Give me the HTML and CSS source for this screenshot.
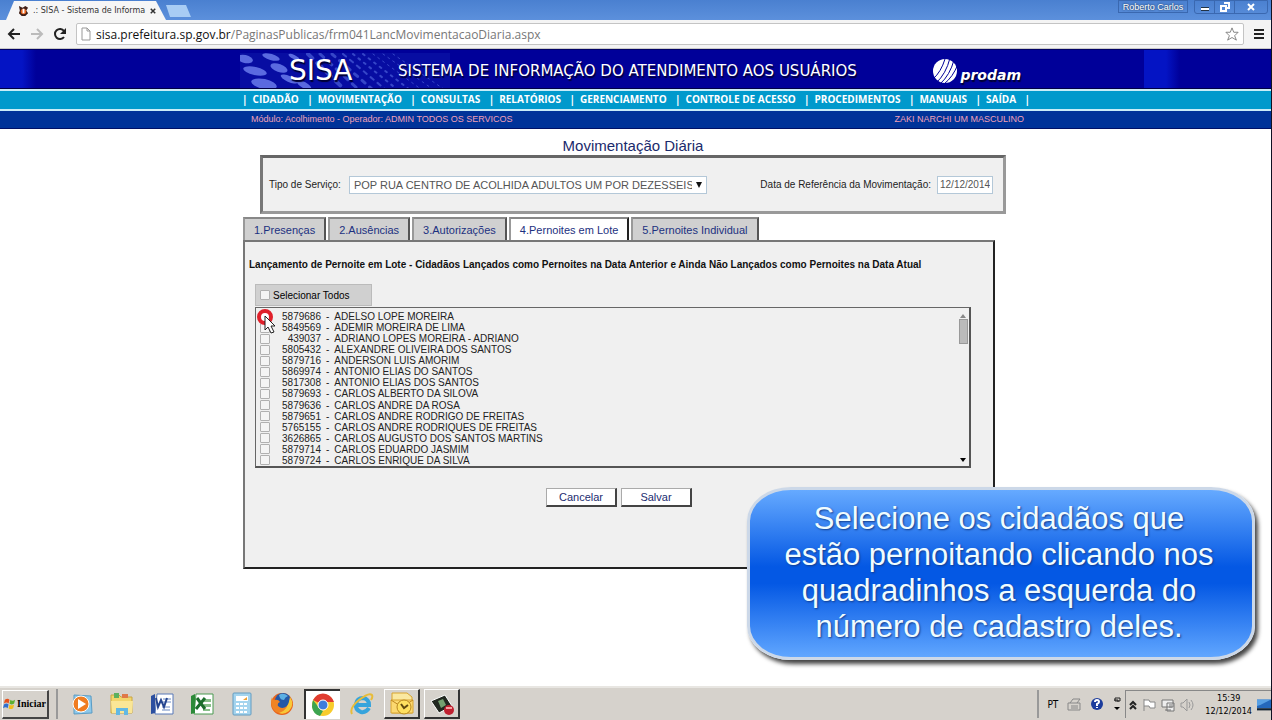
FILE: index.html
```
<!DOCTYPE html>
<html lang="pt-BR">
<head>
    <meta charset="UTF-8">
    <meta name="viewport" content="width=device-width, initial-scale=1.0">
    <title>.: SISA - Sistema de Informação</title>
    <link rel="stylesheet" href="styles.css">
</head>
<body>
    <div class="titlebar">
        <div class="tab">
            <svg class="favicon" viewBox="0 0 12 12"><path d="M1 1l4 2 3-2 3 2-2 3 2 3-3 3H4L1 9l1-3z" fill="#402018"/><circle cx="6" cy="7" r="3" fill="#e8641e"/><path d="M5 4h2v5H5z" fill="#fff"/></svg>
            <span class="tab-title">.: SISA - Sistema de Informa</span>
            <button class="tab-close" aria-label="Fechar aba"><svg viewBox="0 0 8 8"><path d="M1 1l6 6M7 1L1 7" stroke="#333" stroke-width="2"/></svg></button>
        </div>
        <button class="new-tab" aria-label="Nova aba"></button>
        <div class="window-buttons">
            <button class="user-btn">Roberto Carlos</button>
            <div class="window-group">
                <button aria-label="Minimizar"><svg viewBox="0 0 12 10"><path d="M2 7h8" stroke="#234" stroke-width="4"/><path d="M2 7h8" stroke="#fff" stroke-width="2"/></svg></button>
                <button aria-label="Restaurar"><svg viewBox="0 0 12 10"><path d="M5 1h5v5H8M2 4h5v5H2z" fill="none" stroke="#fff" stroke-width="2"/></svg></button>
                <button class="close" aria-label="Fechar"><svg viewBox="0 0 12 10"><path d="M3 2l6 6M9 2L3 8" stroke="#fff" stroke-width="2"/></svg></button>
            </div>
        </div>
    </div>

    <div class="toolbar">
        <button aria-label="Voltar"><svg viewBox="0 0 14 14"><path d="M13 7H3M7 2L2 7l5 5" fill="none" stroke="#222" stroke-width="2"/></svg></button>
        <button aria-label="Avançar"><svg viewBox="0 0 14 14"><path d="M1 7h10M7 2l5 5-5 5" fill="none" stroke="#bbb" stroke-width="2"/></svg></button>
        <button aria-label="Recarregar"><svg viewBox="0 0 14 14"><path d="M11 10a5 5 0 1 1 0-6" fill="none" stroke="#222" stroke-width="2"/><path d="M13 1v6H7z" fill="#222"/></svg></button>
        <div class="address">
            <svg class="page-icon" viewBox="0 0 10 14"><path d="M1 1h5l3 3v9H1zM6 1v3h3" fill="#fff" stroke="#999"/></svg>
            <span class="url"><b>sisa.prefeitura.sp.gov.br</b>/PaginasPublicas/frm041LancMovimentacaoDiaria.aspx</span>
            <button aria-label="Favoritos"><svg viewBox="0 0 16 16"><path d="M8 1l2 5h5l-4 4 2 5-5-3-5 3 2-5-4-4h5z" fill="#fff" stroke="#777"/></svg></button>
        </div>
        <button class="menu-btn" aria-label="Menu"><svg viewBox="0 0 12 12"><path d="M1 2h10M1 6h10M1 10h10" stroke="#222" stroke-width="2"/></svg></button>
    </div>

    <header class="banner">
        <div class="wrap banner-inner">
            <svg class="dots" viewBox="0 0 210 35">
                <rect width="210" height="35" fill="#1424b4" opacity=".35"/>
                <g fill="#5a6ae0">
                    <ellipse cx="5" cy="6" rx="8" ry="4" transform="rotate(12 5 6)"/>
                    <ellipse cx="15" cy="18" rx="12" ry="4" transform="rotate(12 15 18)"/>
                    <ellipse cx="24" cy="31" rx="13" ry="5" transform="rotate(12 24 31)"/>
                    <ellipse cx="31" cy="4" rx="9" ry="3" transform="rotate(16 31 4)"/>
                    <ellipse cx="39" cy="15" rx="9" ry="4" transform="rotate(20 39 15)"/>
                    <ellipse cx="49" cy="26" rx="9" ry="3" transform="rotate(24 49 26)"/>
                    <ellipse cx="54" cy="4" rx="6" ry="2" transform="rotate(26 54 4)"/>
                    <ellipse cx="64" cy="32" rx="8" ry="3" transform="rotate(28 64 32)"/>
                </g>
                <g stroke="#3646c8" fill="none" stroke-linecap="round">
                    <path d="M68 1l37 36" stroke-width="4" stroke-dasharray="6 7"/>
                    <path d="M80 1l39 36" stroke-width="3" stroke-dasharray="5 6"/>
                    <path d="M92 1l41 36" stroke-width="3" stroke-dasharray="4 6"/>
                    <path d="M103 1l43 36" stroke-width="2" stroke-dasharray="4 5"/>
                    <path d="M113 1l45 36M123 1l47 36" stroke-width="2" stroke-dasharray="2 5"/>
                    <path d="M133 1l49 36M143 1l51 36M153 1l52 36" stroke-width="1" stroke-dasharray="2 4"/>
                </g>
            </svg>
            <span class="logo">SISA</span>
            <span class="system-name">SISTEMA DE INFORMAÇÃO DO ATENDIMENTO AOS USUÁRIOS</span>
            <span class="prodam">
                <svg viewBox="0 0 26 26"><circle cx="13" cy="13" r="12" fill="#fff"/><path d="M4 25Q14 16 18 0M8 26Q18 17 22 2M12 26Q21 19 26 6M1 21Q9 14 13 1" fill="none" stroke="#000099" stroke-width="1"/></svg>
                <span>prodam</span>
            </span>
        </div>
    </header>

    <nav class="menu">
        <div class="wrap menu-inner">
            <span>|<a href="#">CIDADÃO</a></span>
            <span>|<a href="#">MOVIMENTAÇÃO</a></span>
            <span>|<a href="#">CONSULTAS</a></span>
            <span>|<a href="#">RELATÓRIOS</a></span>
            <span>|<a href="#">GERENCIAMENTO</a></span>
            <span>|<a href="#">CONTROLE DE ACESSO</a></span>
            <span>|<a href="#">PROCEDIMENTOS</a></span>
            <span>|<a href="#">MANUAIS</a></span>
            <span>|<a href="#">SAÍDA</a></span>
            <span>|</span>
        </div>
    </nav>

    <div class="session">
        <div class="wrap session-inner">
            <span>Módulo: Acolhimento - Operador: ADMIN TODOS OS SERVICOS</span>
            <span>ZAKI NARCHI UM MASCULINO</span>
        </div>
    </div>

    <main class="wrap content">
        <h1>Movimentação Diária</h1>

        <form class="filter">
            <label for="servico">Tipo de Serviço:</label>
            <div class="select-box">
                <select id="servico">
                    <option>POP RUA CENTRO DE ACOLHIDA ADULTOS UM POR DEZESSEIS HORAS</option>
                </select>
            </div>
            <label class="date-label" for="data">Data de Referência da Movimentação:</label>
            <input class="date" type="text" id="data" value="12/12/2014">
        </form>

        <div class="tabs">
            <button>1.Presenças</button>
            <button>2.Ausências</button>
            <button>3.Autorizações</button>
            <button class="active">4.Pernoites em Lote</button>
            <button>5.Pernoites Individual</button>
        </div>

        <section class="panel">
            <h2>Lançamento de Pernoite em Lote - Cidadãos Lançados como Pernoites na Data Anterior e Ainda Não Lançados como Pernoites na Data Atual</h2>
            <div class="select-all">
                <input type="checkbox" id="todos">
                <label for="todos">Selecionar Todos</label>
            </div>
            <div class="list-box">
                <ul class="list">
                    <li><input type="checkbox" id="c1"><label for="c1"><span>5879686</span> - <em>ADELSO LOPE MOREIRA</em></label></li>
                    <li><input type="checkbox" id="c2"><label for="c2"><span>5849569</span> - <em>ADEMIR MOREIRA DE LIMA</em></label></li>
                    <li><input type="checkbox" id="c3"><label for="c3"><span>439037</span> - <em>ADRIANO LOPES MOREIRA - ADRIANO</em></label></li>
                    <li><input type="checkbox" id="c4"><label for="c4"><span>5805432</span> - <em>ALEXANDRE OLIVEIRA DOS SANTOS</em></label></li>
                    <li><input type="checkbox" id="c5"><label for="c5"><span>5879716</span> - <em>ANDERSON LUIS AMORIM</em></label></li>
                    <li><input type="checkbox" id="c6"><label for="c6"><span>5869974</span> - <em>ANTONIO ELIAS DO SANTOS</em></label></li>
                    <li><input type="checkbox" id="c7"><label for="c7"><span>5817308</span> - <em>ANTONIO ELIAS DOS SANTOS</em></label></li>
                    <li><input type="checkbox" id="c8"><label for="c8"><span>5879693</span> - <em>CARLOS ALBERTO DA SILOVA</em></label></li>
                    <li><input type="checkbox" id="c9"><label for="c9"><span>5879636</span> - <em>CARLOS ANDRE DA ROSA</em></label></li>
                    <li><input type="checkbox" id="c10"><label for="c10"><span>5879651</span> - <em>CARLOS ANDRE RODRIGO DE FREITAS</em></label></li>
                    <li><input type="checkbox" id="c11"><label for="c11"><span>5765155</span> - <em>CARLOS ANDRE RODRIQUES DE FREITAS</em></label></li>
                    <li><input type="checkbox" id="c12"><label for="c12"><span>3626865</span> - <em>CARLOS AUGUSTO DOS SANTOS MARTINS</em></label></li>
                    <li><input type="checkbox" id="c13"><label for="c13"><span>5879714</span> - <em>CARLOS EDUARDO JASMIM</em></label></li>
                    <li><input type="checkbox" id="c14"><label for="c14"><span>5879724</span> - <em>CARLOS ENRIQUE DA SILVA</em></label></li>
                </ul>
                <div class="scrollbar">
                    <svg viewBox="0 0 8 6"><path d="M1 5l3-4 3 4z" fill="#888"/></svg>
                    <div class="thumb"></div>
                    <svg viewBox="0 0 8 6"><path d="M1 1l3 4 3-4z" fill="#000"/></svg>
                </div>
                <svg class="pointer" viewBox="0 0 20 26"><circle cx="8" cy="8" r="6" fill="#fff" stroke="#e0202a" stroke-width="4"/><path d="M8 7v14l3-3 3 6 3-1-3-6h4z" fill="#fff" stroke="#222"/></svg>
            </div>
            <div class="actions">
                <button>Cancelar</button>
                <button>Salvar</button>
            </div>
        </section>
    </main>

    <div class="callout">Selecione os cidadãos que estão pernoitando clicando nos quadradinhos a esquerda do número de cadastro deles.</div>

    <footer class="taskbar">
        <button class="start">
            <svg viewBox="0 0 14 14"><path d="M2 3q3-2 5 0L6 7Q4 5 1 7z" fill="#e8501c"/><path d="M8 3q2 2 5 0l-1 4q-3 2-5 0z" fill="#5cae30"/><path d="M1 8q3-2 5 0l-1 4q-2-2-5 0z" fill="#2f6fd0"/><path d="M7 8q2 2 5 0l-1 4q-3 2-5 0z" fill="#f2bc1c"/></svg>
            Iniciar
        </button>
        <div class="quick">
            <button aria-label="Media Player"><svg viewBox="0 0 24 24"><path d="M4 3l17 1 1 17-18 1z" fill="#8cc8ea" stroke="#5a9cc4"/><circle cx="11" cy="12" r="8" fill="#f07c20" stroke="#fff"/><path d="M8 7l8 5-8 5z" fill="#fff"/></svg></button>
            <button aria-label="Explorador"><svg viewBox="0 0 24 24"><path d="M1 3h8l2 2h11v16H1z" fill="#f2d56c" stroke="#c9a540"/><path d="M4 1h5v5H4z" fill="#5cb060"/><path d="M12 2h6v4h-6z" fill="#e07848"/><path d="M1 9h22l-1 12H2z" fill="#fae696"/><path d="M6 23v-7h12v7h-4v-4h-4v4z" fill="#62b8e4"/></svg></button>
            <button aria-label="Word"><svg viewBox="0 0 24 24"><path d="M7 2h16v20H5z" fill="#fff" stroke="#5878b8"/><path d="M13 7h8M13 10h8M12 15h8M12 18h8" stroke="#6888c4"/><path d="M1 4l4-2v19l-4 1z" fill="#2c4fa0"/><path d="M6 6l2 9 3-7 3 7 3-9" fill="none" stroke="#24448f" stroke-width="2"/></svg></button>
            <button aria-label="Excel"><svg viewBox="0 0 24 24"><path d="M6 2h17v20H4z" fill="#fff" stroke="#4a9a50"/><path d="M14 7h7v3h-7zM14 12h7v3h-7zM13 17h7v2h-7z" fill="#88c08a"/><path d="M1 4l4-2v19l-4 1z" fill="#2c8a38"/><path d="M7 6l8 11M15 6L6 17" stroke="#1c6e2c" stroke-width="3"/></svg></button>
            <button aria-label="Calculadora"><svg viewBox="0 0 24 24"><rect x="3" y="1" width="18" height="22" rx="1" fill="#a4d4ee" stroke="#649cc0"/><path d="M6 4h12v5H6z" fill="#fff"/><path d="M13 8l4-3v3z" fill="#f0a030"/><path d="M6 12h12M6 16h12M6 20h12" stroke="#fff" stroke-width="2" stroke-dasharray="3 1"/></svg></button>
            <button aria-label="Firefox"><svg viewBox="0 0 24 24"><circle cx="12" cy="12" r="11" fill="#e8641c"/><circle cx="13" cy="9" r="8" fill="#2458a8"/><path d="M9 3q4-3 9 1-3 1-4 4-3 0-4-2z" fill="#5cb0e4"/><path d="M2 5q0 3 3 3 3-1 5 2-3 1-2 4 4 4 9 0 4-4 3-9 4 6 1 11-6 8-15 4Q-1 14 2 5z" fill="#f08424"/><path d="M20 5q5 8-1 14-5 4-10 2 9-2 11-16z" fill="#f8c838"/></svg></button>
            <button class="pressed" aria-label="Chrome"><svg viewBox="0 0 24 24"><circle cx="12" cy="12" r="11" fill="#f8cc2c"/><path d="M12 12L2 7Q7-1 15 1q6 2 8 8H12z" fill="#e03c30"/><path d="M2 7l7 9 3 2-3 5Q2 21 1 14q0-4 1-7z" fill="#3ca450"/><circle cx="12" cy="12" r="5" fill="#3c7cdc" stroke="#fff" stroke-width="1"/></svg></button>
            <button aria-label="Internet Explorer"><svg viewBox="0 0 24 24"><path d="M19 16q-3 5-8 4-6-2-5-8 1-6 7-6 6 1 6 7H7" fill="none" stroke="#36a4dc" stroke-width="4"/><path d="M2 22Q-1 16 9 8 19 0 22 3q1 2-1 5" fill="none" stroke="#e8bc38" stroke-width="2"/></svg></button>
            <button class="raised" aria-label="Outlook"><svg viewBox="0 0 24 24"><path d="M2 1h15l5 4v16H2z" fill="#fae8a0" stroke="#d8a430"/><path d="M1 8h22v13H1z" fill="#fcd870" stroke="#d8a430"/><path d="M1 8l11 7 11-7" fill="none" stroke="#c08820"/><circle cx="14" cy="15" r="7" fill="#ffe060" stroke="#b88820"/><path d="M11 12l3 4 4-3" fill="none" stroke="#604810" stroke-width="2"/></svg></button>
            <button class="raised" aria-label="Gravador"><svg viewBox="0 0 24 24"><path d="M1 9l14-6 7 11-13 7z" fill="#222820" stroke="#fff"/><path d="M8 9l5-2 3 6-5 3z" fill="#74a070"/><circle cx="19" cy="18" r="5" fill="#c02030"/><path d="M16 16h6" stroke="#f4a0a0" stroke-width="2"/></svg></button>
        </div>
        <div class="lang-bar">
            <span>PT</span>
            <svg viewBox="0 0 14 14"><path d="M1 6h12v7H1zM3 6l3-4h7l-3 4M4 9h7M4 11h7" fill="none" stroke="#888"/></svg>
            <svg class="ruled" viewBox="0 0 14 14"><circle cx="7" cy="7" r="6" fill="#1c3c9c"/><path d="M5 5q0-2 2-2t2 2q0 1-2 2v2M7 10v1" fill="none" stroke="#fff" stroke-width="2"/></svg>
            <svg class="arrows" viewBox="0 0 8 18"><path d="M2 3h5v3H2zM1 5h4v2" fill="none" stroke="#222"/><path d="M1 12h6l-3 3z" fill="#000"/></svg>
        </div>
        <div class="tray">
            <svg class="narrow" viewBox="0 0 8 12"><path d="M1 6l3-3 3 3M1 10l3-3 3 3" fill="none" stroke="#222" stroke-width="2"/></svg>
            <svg viewBox="0 0 14 14"><path d="M2 1v12M2 2h5l1 2h5v6H8L7 8H2" fill="#fff" stroke="#888"/></svg>
            <svg viewBox="0 0 14 14"><path d="M1 2h11v7H1zM4 12h6M6 5h7v8H6zM8 7h3M8 9h3" fill="#eee" stroke="#777"/></svg>
            <svg viewBox="0 0 14 14"><path d="M1 5h2l4-4v12L3 9H1zM9 4q2 3 0 6M11 2q4 5 0 10" fill="none" stroke="#999"/></svg>
            <div class="clock"><span>15:39</span><span>12/12/2014</span></div>
            <svg class="desktop" viewBox="0 0 13 12"><path d="M0 1h13v8H0z" fill="#2468bc"/><path d="M0 1h13L3 6 0 7z" fill="#58a0e4"/><path d="M0 9h13v2H0z" fill="#123"/></svg>
        </div>
    </footer>
</body>
</html>
```
FILE: styles.css
```
* {
    box-sizing: border-box;
}
body {
    font-family: "Liberation Sans", Arial, sans-serif;
    font-size: 10px;
    margin: 0;
    min-height: 100vh;
    display: flex;
    flex-direction: column;
    position: relative;
    background: #fff;
    border-right: 1px solid #112;
}
button {
    font-family: inherit;
    background: none;
    border: none;
    padding: 0;
    cursor: pointer;
}
svg {
    display: block;
}
.wrap {
    width: 791px;
    max-width: 100%;
    margin: 0 auto;
}

/* browser window */
.titlebar {
    display: flex;
    height: 20px;
    background: linear-gradient(#4a80d0, #5c90dc);
}
.tab {
    display: flex;
    align-items: center;
    gap: 4px;
    width: 160px;
    margin: 1px 0 0 6px;
    padding: 0 8px 0 12px;
    background: #f6f6f6;
    clip-path: polygon(8px 0, 150px 0, 160px 100%, 0 100%);
}
.favicon {
    width: 11px;
    height: 11px;
    flex: none;
}
.tab-title {
    flex: 1;
    white-space: nowrap;
    font: 8px "DejaVu Sans", sans-serif;
    color: #333;
}
.tab-close svg {
    width: 6px;
    height: 6px;
    margin-right: 2px;
}
.new-tab {
    width: 25px;
    height: 12px;
    margin-top: 5px;
    background: #a8ccf4;
    clip-path: polygon(0 0, 80% 0, 100% 100%, 16% 100%);
}
.window-buttons {
    display: flex;
    gap: 6px;
    margin-left: auto;
    padding-right: 3px;
}
.user-btn {
    width: 70px;
    height: 13px;
    border: 1px solid #3a68b0;
    font-size: 9px;
    color: #fff;
    text-shadow: 0 0 2px #123;
}
.window-group {
    display: flex;
    height: 14px;
    border: 1px solid #3a68b0;
    border-radius: 0 0 3px 3px;
}
.window-group button {
    display: flex;
    justify-content: center;
    align-items: center;
    width: 20px;
    border-right: 1px solid #3a68b0;
}
.window-group .close {
    width: 32px;
    border: none;
}
.window-group svg {
    width: 12px;
    height: 10px;
}
.toolbar {
    display: flex;
    align-items: center;
    gap: 9px;
    height: 29px;
    padding: 0 6px 0 7px;
    background: #f4f4f4;
    border-bottom: 1px solid #c8c8c8;
}
.toolbar button svg {
    width: 14px;
    height: 14px;
}
.address {
    flex: 1;
    display: flex;
    align-items: center;
    gap: 5px;
    height: 22px;
    padding: 0 4px;
    background: #fff;
    border: 1px solid #c4c4c4;
    border-radius: 2px;
}
.page-icon {
    width: 10px;
    height: 14px;
}
.url {
    flex: 1;
    font: 12px "Open Sans", sans-serif;
    color: #777;
}
.url b {
    font-weight: normal;
    color: #111;
}
.toolbar .menu-btn svg {
    width: 12px;
    height: 12px;
}

/* SISA header */
.banner {
    background: linear-gradient(90deg, #0414c4, #0414c4 22px, #000099 36px) 0 0 / 1144px 100% repeat-x;
    border-top: 1px solid #000066;
    border-bottom: 1px solid #000044;
}
.banner-inner {
    display: flex;
    align-items: center;
    height: 38px;
    position: relative;
    padding: 4px 10px 0 49px;
    font-family: "DejaVu Sans", sans-serif;
    color: #fff;
    text-shadow: 1px 2px 1px #000033;
}
.dots {
    position: absolute;
    left: 0;
    top: 3px;
    width: 210px;
    height: 35px;
}
.logo {
    position: relative;
    width: 109px;
    font-size: 28px;
    line-height: 32px;
}
.system-name {
    position: relative;
    font-size: 15px;
    white-space: nowrap;
}
.prodam {
    display: flex;
    align-items: center;
    gap: 2px;
    margin-left: auto;
    font-size: 14px;
    font-weight: bold;
    font-style: oblique;
}
.prodam svg {
    width: 26px;
    height: 26px;
}
.prodam span {
    padding-top: 8px;
}
.menu {
    background: #0099cc;
    border-top: 2px solid #c8ecf8;
    border-bottom: 2px solid #c8ecf8;
}
.menu-inner {
    display: flex;
    justify-content: space-between;
    padding: 0 1px 2px 2px;
    font: bold 10px/16px "Open Sans", sans-serif;
    color: #fff;
}
.menu a {
    margin-left: 5px;
    color: #fff;
    text-decoration: none;
}
.session {
    background: #003399;
    border-bottom: 1px solid #001166;
}
.session-inner {
    display: flex;
    justify-content: space-between;
    padding: 0 7px 0 11px;
    font-size: 9px;
    line-height: 17px;
    color: #f0a0b8;
}

/* page */
.content {
    flex: 1;
    padding-top: 8px;
}
h1 {
    margin: 0 5px 0 0;
    font-size: 15px;
    line-height: 18px;
    font-weight: normal;
    text-align: center;
    color: #1a2a6c;
}
.filter {
    display: flex;
    align-items: center;
    height: 59px;
    margin: 0 25px 0 20px;
    padding: 0 10px 0 6px;
    background: #f0f0f0;
    border: 3px solid #999;
    border-top-color: #666;
    border-left-color: #777;
    color: #222;
}
.select-box {
    position: relative;
    margin-left: 8px;
}
.select-box::after {
    content: "";
    position: absolute;
    right: 5px;
    top: 6px;
    border: 3px solid transparent;
    border-top: 6px solid #111;
    border-bottom: none;
}
.filter select, .date {
    appearance: none;
    height: 18px;
    padding: 0 14px 0 4px;
    font: 11px "Liberation Sans", Arial, sans-serif;
    color: #555;
    background: #fff;
    border: 1px solid #b4c8d8;
    border-radius: 0;
}
.filter select {
    width: 358px;
}
.date-label {
    margin-left: auto;
}
.filter .date {
    width: 56px;
    margin-left: 6px;
    padding: 0 2px;
    font-size: 10px;
}
.tabs {
    display: flex;
    gap: 2px;
    margin: 3px 0 0 3px;
}
.tabs button {
    height: 23px;
    padding: 0 9px;
    font-size: 11px;
    color: #1c3080;
    background: #d0d0d0;
    border-top: 2px solid #888;
    border-left: 2px solid #999;
    border-right: 2px solid #555;
}
.tabs .active {
    background: #fff;
    border-right-color: #222;
}
.panel {
    height: 329px;
    margin: 0 36px 0 3px;
    padding: 15px 22px 0 10px;
    background: #f0f0f0;
    border: 2px solid #777;
    border-right-color: #222;
    border-bottom-color: #222;
}
.panel h2 {
    margin: 0 -16px 11px -6px;
    font-size: 10px;
    line-height: 16px;
    white-space: nowrap;
    color: #111;
}
.select-all {
    display: flex;
    align-items: center;
    gap: 3px;
    width: 117px;
    height: 22px;
    padding: 0 4px;
    background: #d0d0d0;
    border: 1px solid #bbb;
}
input[type="checkbox"] {
    appearance: none;
    flex: none;
    width: 10px;
    height: 10px;
    margin: 0;
    background: #f4f4f4;
    border: 1px solid #b0b0b0;
    border-radius: 1px;
}
.list-box {
    display: flex;
    position: relative;
    height: 161px;
    margin-top: 1px;
    border: 1px solid #666;
    border-right: 2px solid #555;
    border-bottom: 2px solid #555;
}
.list {
    flex: 1;
    display: flex;
    flex-direction: column;
    justify-content: space-between;
    margin: 0;
    padding: 3px 0 0 4px;
    list-style: none;
    color: #222;
}
.list li {
    display: flex;
    align-items: center;
    gap: 12px;
    height: 11px;
    line-height: 11px;
}
.list label {
    display: flex;
    gap: 5px;
}
.list span {
    width: 39px;
    text-align: right;
}
.list em {
    font-style: normal;
}
.scrollbar {
    display: flex;
    flex-direction: column;
    align-items: center;
    width: 10px;
    padding: 5px 0 3px;
    margin-right: 1px;
}
.scrollbar svg {
    width: 8px;
    height: 6px;
}
.scrollbar svg:last-child {
    margin-top: auto;
}
.thumb {
    width: 9px;
    height: 25px;
    background: #bbb;
    border: 1px solid #999;
}
.pointer {
    position: absolute;
    left: 1px;
    top: 1px;
    width: 20px;
    height: 26px;
}
.actions {
    display: flex;
    justify-content: center;
    gap: 4px;
    margin: 20px -12px 0 0;
}
.actions button {
    width: 71px;
    height: 19px;
    font-size: 11px;
    color: #1c2c70;
    background: #fff;
    border: 1px solid #aaa;
    border-right: 2px solid #444;
    border-bottom: 2px solid #444;
}
.callout {
    position: absolute;
    right: 16px;
    bottom: 60px;
    width: 508px;
    padding: 11px 26px 12px 22px;
    border: 3px solid #ccd8e8;
    border-radius: 44px / 34px;
    background: linear-gradient(#66aaff, #0458e4 46%, #0458e4 56%, #60a6ff);
    box-shadow: 3px 4px 4px #444;
    font-size: 31px;
    line-height: 36px;
    text-align: center;
    color: #f0fcff;
    text-shadow: 1px 1px 2px #123c8c;
}

/* taskbar */
.taskbar {
    display: flex;
    align-items: center;
    height: 34px;
    background: #d6d2cc;
    border-top: 2px solid #e8e6e2;
}
.start {
    display: flex;
    align-items: center;
    gap: 1px;
    width: 47px;
    height: 29px;
    margin-left: 2px;
    font: bold 10px "Liberation Serif", serif;
    border: 1px solid #fff;
    border-right: 2px solid #444;
    border-bottom: 2px solid #444;
}
.start svg {
    width: 13px;
    height: 13px;
    flex: none;
}
.quick {
    display: flex;
    gap: 4px;
    margin-left: 7px;
    padding-left: 6px;
    border-left: 2px solid #999;
}
.quick button {
    display: flex;
    justify-content: center;
    align-items: center;
    width: 36px;
    height: 30px;
}
.quick svg {
    width: 24px;
    height: 24px;
}
.quick .pressed {
    background: #fff;
    border-top: 2px solid #333;
    border-left: 2px solid #333;
}
.quick .raised {
    border: 1px solid #fff;
    border-right: 2px solid #333;
    border-bottom: 2px solid #333;
}
.lang-bar {
    display: flex;
    align-items: center;
    gap: 9px;
    height: 28px;
    margin-left: auto;
    padding: 0 4px 0 8px;
    border-left: 2px solid #999;
    font: 10px "DejaVu Sans Condensed", "DejaVu Sans", sans-serif;
}
.lang-bar svg, .tray svg {
    width: 14px;
    height: 14px;
}
.lang-bar .arrows {
    width: 8px;
    height: 18px;
}
.tray .narrow {
    width: 8px;
}
.tray {
    display: flex;
    align-items: center;
    gap: 5px;
    height: 28px;
    padding-left: 3px;
    border-top: 1px solid #888;
    border-left: 1px solid #888;
}
.clock {
    display: flex;
    flex-direction: column;
    align-items: center;
    margin-left: 6px;
    font: 9px/13px "DejaVu Sans Condensed", "DejaVu Sans", sans-serif;
}
```
